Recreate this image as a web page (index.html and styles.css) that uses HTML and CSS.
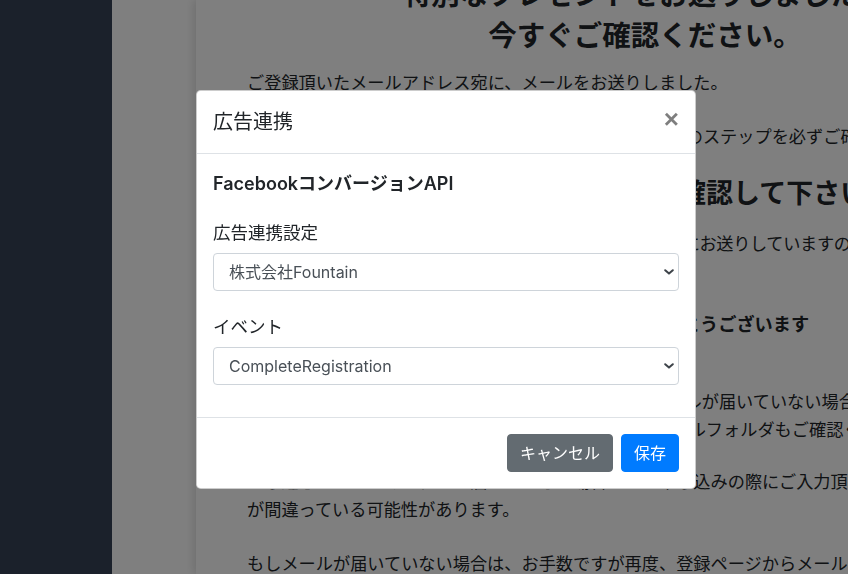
FILE: index.html
```html
<!DOCTYPE html>
<html lang="ja">
<head>
<meta charset="utf-8">
<title>広告連携</title>
<link rel="stylesheet" href="styles.css">
</head>
<body>
<div class="app">
  <aside class="sidebar"></aside>
  <main class="main">
    <article class="card">
      <h1 class="hero">特別なプレゼントをお送りしました！<br>今すぐご確認ください。</h1>
      <p class="text lead">ご登録頂いたメールアドレス宛に、メールをお送りしました。</p>
      <p class="text intro">会員本登録を完了させるために、お手数ですが以下の3つのステップを必ずご確認ください。</p>
      <h2 class="step-title">ステップ１：受信したメールをまず確認して下さい</h2>
      <p class="text step-text">認証用のURLは、お客様がご登録頂いたメールアドレス宛にお送りしていますので、ご確認ください。</p>
      <h3 class="thanks">この度は、当サービスにご登録いただき、誠にありがとうございます</h3>
      <p class="text notice">お申し込み後、5分経ってもご登録頂いたアドレスにメールが届いていない場合は、<br>念のため、Gmail等のフリーメール利用の場合は迷惑メールフォルダもご確認ください。</p>
      <p class="text notice-2">もし迷惑メールフォルダにも届いていない場合は、お申し込みの際にご入力頂いたメールアドレス<br>が間違っている可能性があります。</p>
      <p class="text notice-3">もしメールが届いていない場合は、お手数ですが再度、登録ページからメールアドレスをご登録ください。</p>
    </article>
  </main>
</div>

<div class="backdrop"></div>

<div class="modal" role="dialog">
  <div class="modal-header">
    <h5 class="modal-title">広告連携</h5>
    <button class="close" type="button">×</button>
  </div>
  <div class="modal-body">
    <h6 class="section-title">FacebookコンバージョンAPI</h6>
    <div class="field">
      <label class="field-label">広告連携設定</label>
      <div class="select-wrap">
        <select class="select"><option>株式会社Fountain</option></select>
        <svg class="chevron" viewBox="0 0 10 6" width="10" height="6"><path d="M1.2 1.2 L5 4.6 L8.8 1.2" fill="none" stroke="#3d4349" stroke-width="2" stroke-linecap="round" stroke-linejoin="round"/></svg>
      </div>
    </div>
    <div class="field">
      <label class="field-label">イベント</label>
      <div class="select-wrap">
        <select class="select"><option>CompleteRegistration</option></select>
        <svg class="chevron" viewBox="0 0 10 6" width="10" height="6"><path d="M1.2 1.2 L5 4.6 L8.8 1.2" fill="none" stroke="#3d4349" stroke-width="2" stroke-linecap="round" stroke-linejoin="round"/></svg>
      </div>
    </div>
  </div>
  <div class="modal-footer">
    <button class="btn btn-secondary" type="button">キャンセル</button>
    <button class="btn btn-primary" type="button">保存</button>
  </div>
</div>
</body>
</html>
```

FILE: styles.css
```css
html, body {
  margin: 0;
  height: 100%;
  overflow: hidden;
}

body {
  font-family: "Inter", "Noto Sans CJK JP", sans-serif;
  color: #212529;
  background: #fff;
}

.app {
  display: flex;
  height: 574px;
}

.sidebar {
  flex: none;
  width: 112px;
  background: #364256;
}

.main {
  flex: 1;
  display: flex;
  overflow: hidden;
  background: #fff;
  padding-left: 84px;
}

.card {
  flex: none;
  width: 898px;
  box-sizing: border-box;
  padding: 0 51px;
  background: #fff;
  box-shadow: -3px 0 8px rgba(0, 0, 0, 0.12);
  font-family: "Noto Sans CJK JP", sans-serif;
}

.hero {
  margin: -28px 0 0;
  font-size: 28.5px;
  line-height: 41px;
  font-weight: 700;
  text-align: center;
}

.text {
  margin: 0;
  font-size: 17.2px;
  line-height: 28px;
  white-space: nowrap;
}

.lead { margin-top: 14px; }
.intro { margin-top: 26px; }

.step-title {
  margin: 22px 0 0;
  font-size: 27px;
  line-height: 40.5px;
  font-weight: 700;
  white-space: nowrap;
}

.step-text {
  margin-top: 16px;
  letter-spacing: -0.35px;
}

.thanks {
  margin: 53px 0 0;
  font-size: 18.2px;
  line-height: 27px;
  font-weight: 700;
  white-space: nowrap;
}

.notice { margin-top: 50px; }
.notice-2 { margin-top: 24px; }
.notice-3 { margin-top: 26px; }

.backdrop {
  position: fixed;
  inset: 0;
  background: rgba(0, 0, 0, 0.5);
}

.modal {
  position: fixed;
  top: 90px;
  left: 196px;
  width: 500px;
  box-sizing: border-box;
  background: #fff;
  border: 1px solid rgba(0, 0, 0, 0.2);
  border-radius: 4.8px;
}

.modal-header {
  display: flex;
  align-items: flex-start;
  padding: 16px;
  border-bottom: 1px solid #dee2e6;
}

.modal-title {
  margin: 0;
  font-size: 20px;
  line-height: 30px;
  font-weight: 400;
}

.close {
  margin: -16px -16px -16px auto;
  padding: 16px;
  border: 0;
  background: none;
  font-family: "Liberation Sans", sans-serif;
  font-size: 26px;
  font-weight: 700;
  line-height: 24px;
  color: #000;
  opacity: 0.5;
}

.modal-body {
  padding: 16px 16px 32px;
}

.section-title {
  margin: 0 0 24px;
  font-size: 18px;
  line-height: 27px;
  font-weight: 600;
}

.field + .field {
  margin-top: 24px;
}

.field-label {
  display: block;
  margin-bottom: 8px;
  font-size: 17.5px;
  line-height: 24px;
}

.select-wrap {
  position: relative;
}

.select {
  display: block;
  width: 100%;
  height: 38px;
  box-sizing: border-box;
  padding: 0 30px 0 15px;
  border: 1px solid #ced4da;
  border-radius: 4px;
  background: #fff;
  color: #495057;
  font-family: inherit;
  font-size: 16px;
  appearance: none;
  -webkit-appearance: none;
}

.chevron {
  position: absolute;
  right: 5px;
  top: 16px;
  pointer-events: none;
}

.modal-footer {
  display: flex;
  justify-content: flex-end;
  gap: 8px;
  padding: 16px;
  border-top: 1px solid #dee2e6;
}

.btn {
  height: 38px;
  padding: 0 12px;
  border: 1px solid transparent;
  border-radius: 4px;
  font-family: inherit;
  font-size: 16px;
  line-height: 36px;
  color: #fff;
}

.btn-secondary {
  background: #636b71;
  border-color: #636b71;
}

.btn-primary {
  background: #007bff;
  border-color: #007bff;
}
```
